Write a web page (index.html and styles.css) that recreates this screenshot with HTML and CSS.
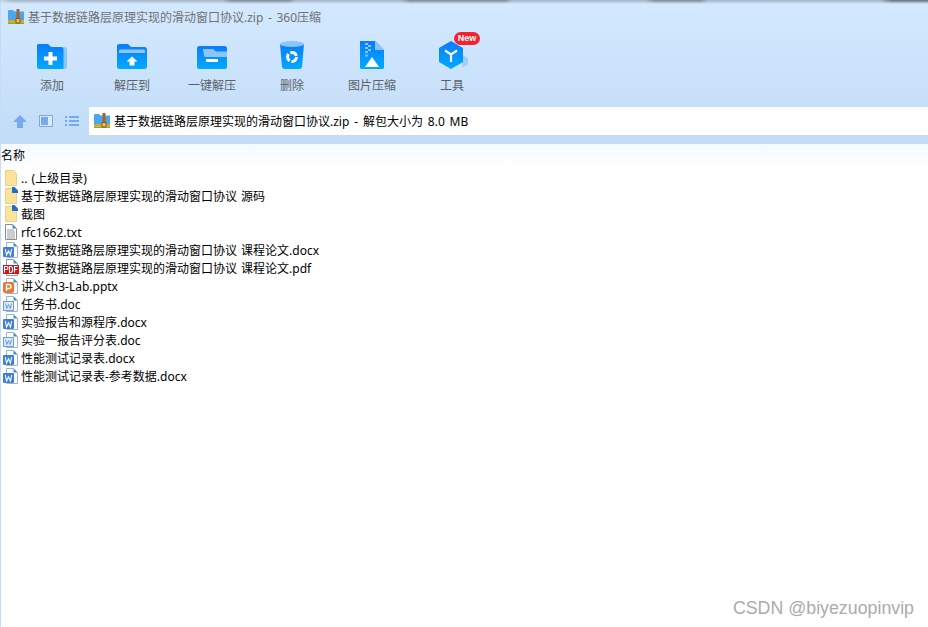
FILE: index.html
```html
<!DOCTYPE html>
<html lang="zh-CN">
<head>
  <meta charset="UTF-8">
  <title>360压缩</title>
  <link rel="stylesheet" href="styles.css">
</head>
<body>
  <svg class="sprite" width="0" height="0">
    <defs>
      <linearGradient id="blue" x1="0" y1="0" x2="0" y2="1">
        <stop offset="0" stop-color="#0a7cfb"/>
        <stop offset="1" stop-color="#00aaff"/>
      </linearGradient>
      <symbol id="zip" viewBox="0 0 16 16">
        <path d="M0 2.500C0 1.500.6 1 1.500 1H5l1.500 1.500H16V11H0z" fill="#4aa6ee"/>
        <path d="M0 11h16v2.500H0z" fill="#f09a1e"/>
        <path d="M0 13.500h16V15H0z" fill="#67b83c"/>
        <path d="M8.500 0h3v10h-3z" fill="#a5622a"/>
        <path d="M8 9.500h4V14H8z" fill="#f6c445" stroke="#8a5420" stroke-width="1"/>
      </symbol>
      <symbol id="folder" viewBox="0 0 14 18">
        <path d="M1.500 1.500h8l3 3v12h-11z" fill="#fde39a" stroke="#ecd08a"/>
      </symbol>
      <symbol id="folder-link" viewBox="0 0 14 18">
        <path d="M1.500 1.500h8l3 3v12h-11z" fill="#fde39a" stroke="#ecd08a"/>
        <path d="M8 0h2.500L14 3.500V6H8z" fill="#1f6fc8"/>
      </symbol>
      <symbol id="txt" viewBox="0 0 14 18">
        <path d="M1.500 1.500h7l4 4v11h-11z" fill="#fff" stroke="#8d8d8d"/>
        <path d="M8.500 1.500v4h4z" fill="#3f8fdc"/>
        <path d="M3 7h7M3 9h8M3 11h8M3 13h8M3 15h8" stroke="#9a9a9a" fill="none"/>
      </symbol>
      <symbol id="doc" viewBox="0 0 16 18">
        <path d="M3.500 1.500h7l4 4v11h-11z" fill="#fff" stroke="#9db4cf"/>
        <path d="M10.500 1.500v4h4z" fill="#3f8fdc"/>
        <rect x=".5" y="6.500" width="10" height="9" fill="#dce9f8" stroke="#6b9ede"/>
        <path d="M2.500 8.500l1.200 5 1.800-4 1.800 4 1.200-5" fill="none" stroke="#6b9ede" stroke-width="1"/>
      </symbol>
      <symbol id="docx" viewBox="0 0 16 18">
        <path d="M3.500 1.500h7l4 4v11h-11z" fill="#fff" stroke="#9db4cf"/>
        <path d="M10.500 1.500v4h4z" fill="#3f8fdc"/>
        <rect x="0" y="6" width="11" height="10" rx="1" fill="#3f7fdb"/>
        <path d="M2.300 8l1.300 6 1.900-4.200 1.900 4.200 1.300-6" fill="none" stroke="#fff" stroke-width="1.100"/>
      </symbol>
      <symbol id="pdf" viewBox="0 0 16 18">
        <path d="M3.500 .5h7l4 4v12h-11z" fill="#fff" stroke="#9a9a9a"/>
        <path d="M10.500 .5v4h4z" fill="#3f8fdc"/>
        <rect x="0" y="6" width="16" height="9" fill="#d6121d"/>
        <path d="M1.500 13.500v-6h2a1.500 1.500 0 0 1 0 3h-2M6.500 7.500v6h1.300c2.400 0 2.400-6 0-6zM11.500 13.500v-6h3.200M11.500 10.500h2.700" fill="none" stroke="#fff" stroke-width="1.100"/>
      </symbol>
      <symbol id="pptx" viewBox="0 0 16 18">
        <path d="M3.500 1.500h7l4 4v11h-11z" fill="#fff" stroke="#9db4cf"/>
        <path d="M10.500 1.500v4h4z" fill="#3f8fdc"/>
        <rect x="0" y="5" width="11" height="11" rx="2" fill="#f0742f"/>
        <path d="M3.500 14v-6.500h2.500a2 2 0 0 1 0 4H3.500" fill="none" stroke="#fff" stroke-width="1.300"/>
      </symbol>
    </defs>
  </svg>

  <div class="window">
    <div class="top-shadow"></div>

    <div class="titlebar">
      <svg class="zip-icon"><use href="#zip"/></svg>
      <span>基于数据链路层原理实现的滑动窗口协议.zip - 360压缩</span>
    </div>

    <div class="toolbar">
      <div class="tool">
        <svg class="tool-icon" viewBox="0 0 32 30">
          <path d="M1 5.500C1 4.500 2 4 3.500 4H12l3 3h13c1.500 0 3 1.200 3 2.500v17c0 1.500-1 2.500-2.500 2.500h-26C2 29 1 28 1 26.500z" fill="#8cc4fd"/>
          <path d="M1 5.500C1 4.500 2 4 3.500 4H12l3 3h10c1.500 0 2.500 1 2.500 2.500V29h-24C2 29 1 28 1 26.500z" fill="url(#blue)"/>
          <path d="M12.500 12h4v4.500H21v4h-4.500V25h-4v-4.500H8v-4h4.500z" fill="#fff"/>
        </svg>
        <span>添加</span>
      </div>
      <div class="tool">
        <svg class="tool-icon" viewBox="0 0 32 30">
          <path d="M1 6C1 4.800 2 4 3.500 4H12l3 3h13.500C30 7 31 8 31 9.500v17c0 1.500-1 2.500-2.500 2.500h-25C2 29 1 28 1 26.500z" fill="url(#blue)"/>
          <path d="M3 11c0-1 .7-1.500 1.500-1.500h23c.8 0 1.500.5 1.500 1.500v2H3z" fill="#8cc4fd"/>
          <path d="M16 16.500l5.500 5h-3V25.500h-5v-4h-3z" fill="#fff"/>
        </svg>
        <span>解压到</span>
      </div>
      <div class="tool">
        <svg class="tool-icon" viewBox="0 0 32 30">
          <rect x="1" y="6" width="30" height="23" rx="2.500" fill="url(#blue)"/>
          <path d="M7 9h10l3 2.500h11V17H10c-1 0-1.500-.5-2-1.500z" fill="#8cc4fd"/>
          <rect x="10" y="19" width="12" height="3" fill="#fff"/>
        </svg>
        <span>一键解压</span>
      </div>
      <div class="tool">
        <svg class="tool-icon" viewBox="0 0 32 30">
          <path d="M4 4h24l-2 23c-.2 1.200-1.500 2-3 2H9c-1.500 0-2.800-.8-3-2z" fill="url(#blue)"/>
          <ellipse cx="16" cy="4" rx="12" ry="3" fill="#8cc4fd"/>
          <circle cx="16" cy="17" r="4.500" fill="none" stroke="#fff" stroke-width="3" stroke-dasharray="7.500 1.930"/>
        </svg>
        <span>删除</span>
      </div>
      <div class="tool">
        <svg class="tool-icon" viewBox="0 0 32 30">
          <path d="M4 1h15l9 9v17.500c0 1-1 1.500-2 1.500H6c-1 0-2-.5-2-1.500z" fill="url(#blue)"/>
          <path d="M19 1l9 9h-9z" fill="#8cc4fd"/>
          <path d="M9 3h3v2H9zM12 5h3v2h-3zM9 7h3v2H9zM12 9h3v2h-3zM9 11h3v2H9z" fill="#8cc4fd"/>
          <circle cx="10.500" cy="15.500" r="1.300" fill="#8cc4fd"/>
          <path d="M9 27l7-10 7 10z" fill="#fff"/>
        </svg>
        <span>图片压缩</span>
      </div>
      <div class="tool">
        <svg class="tool-icon" viewBox="0 0 32 30">
          <path d="M26 15l6 3v6.500l-6 3z" fill="#9fcdfd"/>
          <path d="M15 1l12 7v14l-12 7-12-7V8z" fill="url(#blue)"/>
          <path d="M9 10.500l6 4 6-4M15 14.500V22" fill="none" stroke="#fff" stroke-width="2.200"/>
        </svg>
        <span>工具</span>
        <b class="badge">New</b>
      </div>
    </div>

    <div class="address-row">
      <div class="nav">
        <svg width="14" height="13" viewBox="0 0 14 13"><path d="M7 0l7 7h-4v6H4V7H0z" fill="#76a9ee"/></svg>
        <svg width="14" height="12" viewBox="0 0 14 12"><path d="M.5 .5h13v11H.5z" fill="#dbe9fb" stroke="#76a9ee"/><path d="M2 2h7v8H2z" fill="#76a9ee"/></svg>
        <svg width="14" height="10" viewBox="0 0 14 10"><path d="M0 0h2v2H0zM4 0h10v2H4zM0 4h2v2H0zM4 4h10v2H4zM0 8h2v2H0zM4 8h10v2H4z" fill="#76a9ee"/></svg>
      </div>
      <div class="address">
        <svg class="zip-icon"><use href="#zip"/></svg>
        <span>基于数据链路层原理实现的滑动窗口协议.zip - 解包大小为 8.0 MB</span>
      </div>
    </div>

    <div class="list-head">名称</div>

    <ul class="files">
      <li><svg class="file-icon"><use href="#folder"/></svg>.. (上级目录)</li>
      <li><svg class="file-icon"><use href="#folder-link"/></svg>基于数据链路层原理实现的滑动窗口协议 源码</li>
      <li><svg class="file-icon"><use href="#folder-link"/></svg>截图</li>
      <li><svg class="file-icon"><use href="#txt"/></svg>rfc1662.txt</li>
      <li><svg class="file-icon"><use href="#docx"/></svg>基于数据链路层原理实现的滑动窗口协议 课程论文.docx</li>
      <li><svg class="file-icon"><use href="#pdf"/></svg>基于数据链路层原理实现的滑动窗口协议 课程论文.pdf</li>
      <li><svg class="file-icon"><use href="#pptx"/></svg>讲义ch3-Lab.pptx</li>
      <li><svg class="file-icon"><use href="#doc"/></svg>任务书.doc</li>
      <li><svg class="file-icon"><use href="#docx"/></svg>实验报告和源程序.docx</li>
      <li><svg class="file-icon"><use href="#doc"/></svg>实验一报告评分表.doc</li>
      <li><svg class="file-icon"><use href="#docx"/></svg>性能测试记录表.docx</li>
      <li><svg class="file-icon"><use href="#docx"/></svg>性能测试记录表-参考数据.docx</li>
    </ul>

    <div class="watermark">CSDN @biyezuopinvip</div>
  </div>
</body>
</html>
```

FILE: styles.css
```css
* {
  margin: 0;
  padding: 0;
  box-sizing: border-box;
}

body {
  width: 928px;
  height: 627px;
  overflow: hidden;
  background: #fff;
  font-family: "Noto Sans", "Noto Sans CJK SC", sans-serif;
  font-size: 12px;
  color: #000;
}

.sprite {
  display: block;
  position: absolute;
}

.window {
  position: relative;
  display: flex;
  flex-direction: column;
  height: 627px;
  border-left: 1px solid #c5dcf6;
  background: linear-gradient(#d4e9ff 0, #c2dcf7 144px, #f5faff 144px, #fff 170px);
}

.top-shadow {
  height: 4px;
  margin-left: -1px;
  background: linear-gradient(90deg, #c4d4e6 0, #a3b2c4 12px, #a3b2c4 222px, #76828f 232px, #76828f 288px, #a3b2c4 296px, #a3b2c4 400px, #76828f 410px, #76828f 505px, #a3b2c4 512px, #a3b2c4 645px, #76828f 655px, #76828f 700px, #a3b2c4 708px, #a3b2c4 880px, #5f6a78 892px, #5f6a78 928px);
  -webkit-mask-image: linear-gradient(#000, transparent);
  mask-image: linear-gradient(#000, transparent);
}

.titlebar {
  display: flex;
  align-items: center;
  gap: 4px;
  height: 26px;
  padding-left: 7px;
  color: #6f7174;
  white-space: nowrap;
  word-spacing: 1.5px;
}

.zip-icon {
  width: 16px;
  height: 16px;
  flex-shrink: 0;
}

.toolbar {
  display: flex;
  height: 77px;
  padding-left: 11px;
  padding-top: 10px;
}

.tool {
  position: relative;
  display: flex;
  flex-direction: column;
  align-items: center;
  width: 80px;
  color: #5c6167;
}

.tool-icon {
  width: 32px;
  height: 30px;
  margin-bottom: 6px;
}

.badge {
  position: absolute;
  top: -8px;
  left: 42px;
  width: 26px;
  border-radius: 7px;
  background: #f5212f;
  color: #fff;
  font-family: "Liberation Sans", sans-serif;
  font-size: 9px;
  font-weight: 700;
  line-height: 13px;
  text-align: center;
}

.address-row {
  display: flex;
  height: 28px;
}

.nav {
  display: flex;
  align-items: center;
  gap: 12px;
  width: 88px;
  padding-left: 12px;
}

.address {
  display: flex;
  flex: 1;
  align-items: center;
  gap: 4px;
  padding-left: 5px;
  background: #fff;
  white-space: nowrap;
  word-spacing: 1.75px;
}

.list-head {
  height: 25px;
  margin-top: 9px;
  line-height: 24px;
}

.files {
  list-style: none;
}

.files li {
  display: flex;
  align-items: center;
  gap: 2px;
  height: 18px;
  padding-left: 2px;
  white-space: pre;
  word-spacing: 1px;
}

.file-icon {
  width: 16px;
  height: 18px;
  flex-shrink: 0;
}

.watermark {
  position: absolute;
  right: 14px;
  bottom: 8px;
  font-family: "Liberation Sans", sans-serif;
  font-size: 17.8px;
  color: #ababab;
}
```
